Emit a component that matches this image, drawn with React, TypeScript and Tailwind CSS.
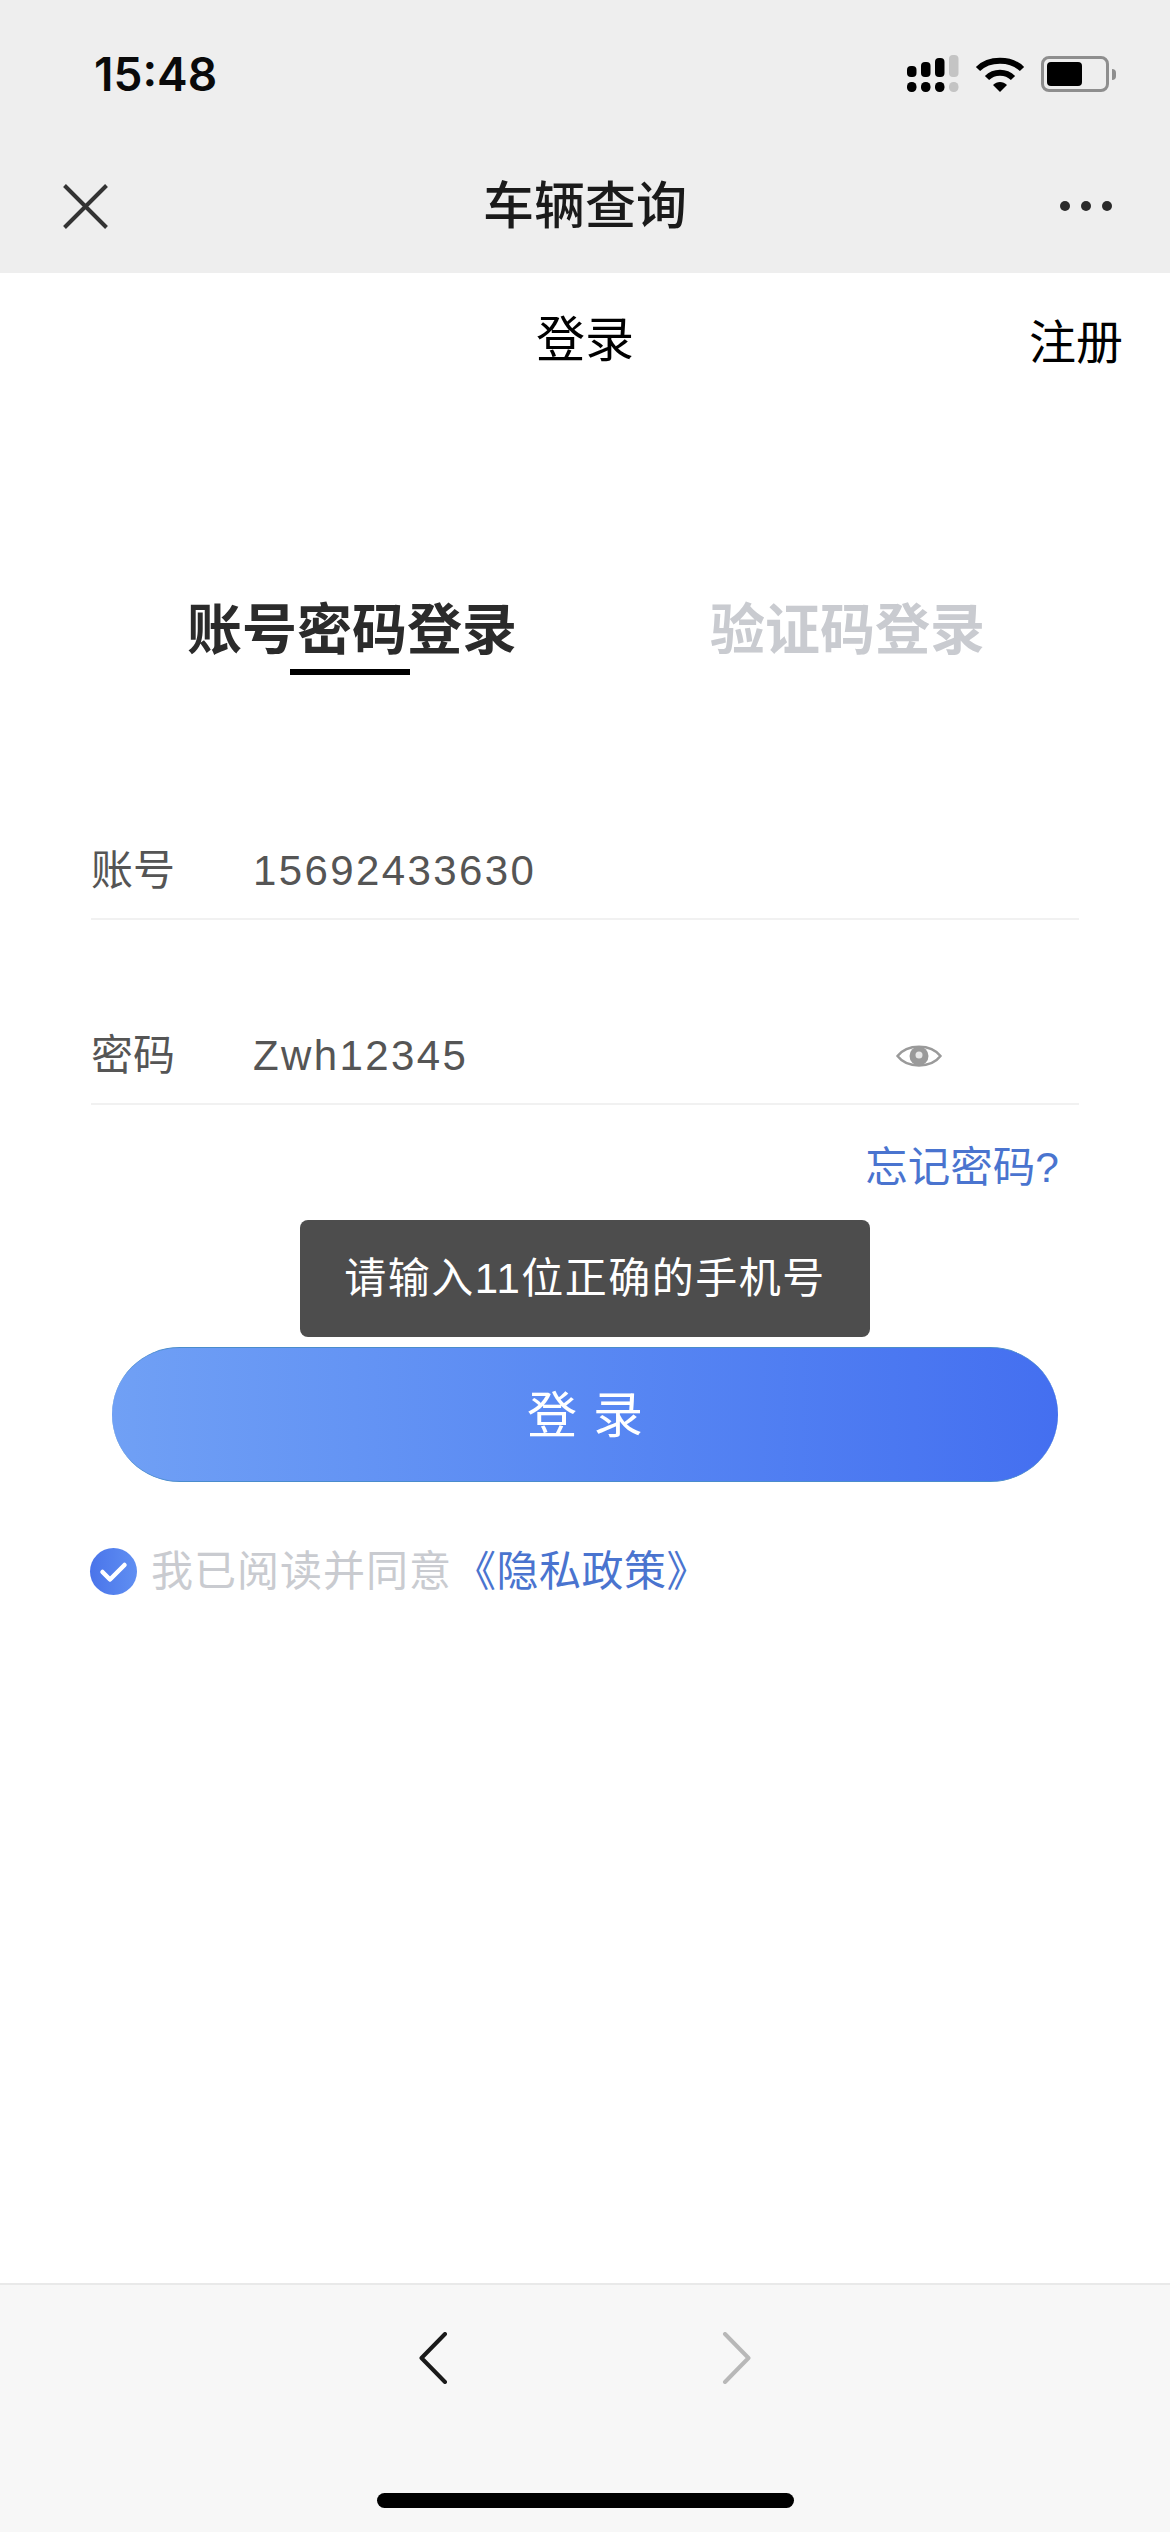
const fontStack = "font-['Liberation_Sans','Noto_Sans_CJK_SC',sans-serif]";

function SignalIcon() {
  const bars = [
    { x: 0, top: 11, h: 11, fill: '#000' },
    { x: 14, top: 7, h: 15, fill: '#000' },
    { x: 28, top: 3, h: 19, fill: '#000' },
    { x: 42, top: 0, h: 22, fill: '#c4c4c4' },
  ];
  return (
    <svg width="52" height="38" viewBox="0 0 52 38" aria-hidden="true">
      {bars.map((b) => (
        <g key={b.x} fill={b.fill}>
          <rect x={b.x} y={b.top} width="9.5" height={b.h} rx="4" />
          <rect x={b.x} y="27" width="9.5" height="10" rx="4.5" />
        </g>
      ))}
    </svg>
  );
}

function WifiIcon() {
  return (
    <svg width="50" height="38" viewBox="0 0 50 38" fill="none" aria-hidden="true">
      <path d="M3 14 C14 3 36 3 47 14" stroke="#000" strokeWidth="6" />
      <path d="M12 23 C19 16 31 16 38 23" stroke="#000" strokeWidth="6" />
      <path d="M18 30 C22 26 28 26 32 30 L25 37 Z" fill="#000" />
    </svg>
  );
}

function BatteryIcon() {
  return (
    <div className="flex items-center">
      <div className="flex h-[36px] w-[68px] items-center rounded-[8px] border-[3px] border-[#8e8e8e] pl-[3px]">
        <div className="h-[24px] w-[35px] rounded-[4px] bg-black" />
      </div>
      <div className="ml-[3px] h-[11px] w-[4px] rounded-r-full bg-[#8e8e8e]" />
    </div>
  );
}

function Chevron({ dir, color }: { dir: 'left' | 'right'; color: string }) {
  return (
    <svg width="29" height="52" viewBox="0 0 29 52" fill="none" aria-hidden="true">
      <path
        d={dir === 'left' ? 'M26 2 L2.5 26 L26 50' : 'M3 2 L26.5 26 L3 50'}
        stroke={color}
        strokeWidth="4"
        strokeLinecap="round"
        strokeLinejoin="round"
      />
    </svg>
  );
}

function EyeIcon() {
  return (
    <svg width="46" height="22" viewBox="0 0 46 22" aria-hidden="true">
      <path d="M1.5 11 C11 -1.5 35 -1.5 44.5 11 C35 23.5 11 23.5 1.5 11 Z" fill="none" stroke="#9a9a9a" strokeWidth="2.5" />
      <circle cx="23" cy="11" r="9.5" fill="#9a9a9a" />
      <circle cx="23" cy="10" r="3.5" fill="#e8e8e8" />
    </svg>
  );
}

function Field({ label, value, eye }: { label: string; value: string; eye?: boolean }) {
  return (
    <div className="flex h-[102px] items-center border-b-2 border-[#f1f1f1] pt-[6px] text-[42px] text-[#555555]">
      <span className="w-[162px] shrink-0 leading-none">{label}</span>
      <span className="tracking-[2.4px] leading-none">{value}</span>
      {eye && (
        <span className="mr-[137px] ml-auto flex">
          <EyeIcon />
        </span>
      )}
    </div>
  );
}

export default function App() {
  return (
    <div className={`relative flex h-[2532px] w-[1170px] flex-col overflow-hidden bg-white ${fontStack}`}>
      <header className="h-[273px] shrink-0 bg-[#eeeeee]">
        <div className="flex h-[150px] items-center justify-between pr-[54px] pl-[94px] pb-[2px]">
          <span className="font-['Inter'] text-[46px] leading-none font-semibold text-[#0a0a0a]">15:48</span>
          <div className="flex items-center gap-[16px]">
            <SignalIcon />
            <WifiIcon />
            <BatteryIcon />
          </div>
        </div>
        <div className="grid h-[112px] grid-cols-[1fr_auto_1fr] items-center px-[58px]">
          <svg className="ml-[5px]" width="45" height="45" viewBox="0 0 45 45" fill="none" aria-hidden="true">
            <path d="M1.5 1.5 L43.5 43.5 M43.5 1.5 L1.5 43.5" stroke="#333333" strokeWidth="4" />
          </svg>
          <h1 className="text-[51px] leading-none font-medium text-[#1a1a1a]">车辆查询</h1>
          <div className="flex justify-end gap-[11px]">
            <span className="h-[10px] w-[10px] rounded-full bg-[#2a2a2a]" />
            <span className="h-[10px] w-[10px] rounded-full bg-[#2a2a2a]" />
            <span className="h-[10px] w-[10px] rounded-full bg-[#2a2a2a]" />
          </div>
        </div>
      </header>

      <main className="flex-1">
        <div className="grid h-[132px] grid-cols-[1fr_auto_1fr] items-center px-[47px]">
          <span />
          <span className="mt-[2px] text-[49px] leading-none text-black">登录</span>
          <span className="mt-[6px] justify-self-end text-[47px] leading-none text-black">注册</span>
        </div>

        <div className="mt-[198px] flex pl-[187px]">
          <div className="flex w-[330px] flex-col items-center">
            <span className="text-[55px] leading-[55px] font-bold text-[#2b2b2b]">账号密码登录</span>
            <span className="mt-[11px] mr-[4px] h-[6px] w-[120px] bg-black" />
          </div>
          <span className="ml-[193px] text-[55px] leading-[55px] font-bold text-[#c9cbd0]">验证码登录</span>
        </div>

        <div className="mt-[143px] px-[91px]">
          <Field label="账号" value="15692433630" />
          <div className="mt-[83px]">
            <Field label="密码" value="Zwh12345" eye />
          </div>
          <div className="mt-[39px] pr-[20px] text-right text-[42.5px] leading-[48px] text-[#4a74cf]">忘记密码?</div>
        </div>

        <button className="mx-[112px] mt-[155px] flex h-[135px] w-[946px] items-center justify-center rounded-full border-y border-[#4a8ccc] bg-gradient-to-r from-[#70a0f5] to-[#446ff0] text-[50px] tracking-[16px] text-white">
          <span className="mt-[2px] ml-[16px] leading-none">登录</span>
        </button>

        <div className="mt-[66px] flex items-center pl-[90px] text-[42px] leading-none">
          <span className="flex h-[47px] w-[47px] items-center justify-center rounded-full bg-gradient-to-r from-[#4a74ea] to-[#608ff2]">
            <svg width="29" height="22" viewBox="0 0 29 22" fill="none" aria-hidden="true">
              <path d="M3.5 11 L11 18.5 L25.5 4" stroke="#fff" strokeWidth="4.5" strokeLinecap="round" strokeLinejoin="round" />
            </svg>
          </span>
          <span className="ml-[14px] tracking-[1px] text-[#c9cbd0]">我已阅读并同意</span>
          <span className="ml-[2px] tracking-[0.5px] text-[#4a74cf]">《隐私政策》</span>
        </div>
      </main>

      <footer className="flex h-[249px] shrink-0 flex-col items-center border-t-2 border-[#e9e9e9] bg-[#f7f7f7]">
        <div className="mt-[47px] flex w-[332px] justify-between">
          <Chevron dir="left" color="#1a1a1a" />
          <Chevron dir="right" color="#b8b8b8" />
        </div>
        <div className="mt-[109px] h-[15px] w-[417px] rounded-full bg-black" />
      </footer>

      {/* toast sits over the form */}
      <div className="absolute top-[1220px] left-[300px] flex h-[117px] w-[570px] items-center justify-center rounded-[8px] bg-[#4d4d4d] text-[42px] tracking-[1.5px] text-white">
        请输入11位正确的手机号
      </div>
    </div>
  );
}
